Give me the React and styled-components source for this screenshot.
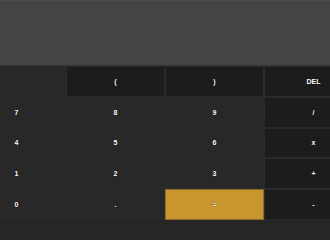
import React from "react";
import styled, { createGlobalStyle } from "styled-components";

const Global = createGlobalStyle`
  html, body { margin: 0; padding: 0; background: #262626; overflow: hidden; }
  #root { width: 330px; height: 220px; overflow: hidden; }
`;

const Frame = styled.div`
  width: 330px;
  height: 220px;
  overflow: hidden;
  display: flex;
  justify-content: center;
`;

const Calculator = styled.div`
  flex: 0 0 396px;
  height: 220px;
  display: flex;
  flex-direction: column;
  font-family: "Liberation Sans", Arial, sans-serif;
`;

const Screen = styled.div`
  flex: 0 0 66px;
  box-sizing: border-box;
  background: #444444;
  border-top: 1px solid #4d4d4d;
  border-bottom: 1px solid #333333;
`;

const Keys = styled.div`
  flex: 1;
  display: grid;
  grid-template-columns: repeat(4, 1fr);
  grid-template-rows: repeat(5, 1fr);
`;

const tones = {
  num: "#282828",
  op: "#1c1c1c",
  eq: "#c8952f",
  blank: "#282828",
};

const Key = styled.button`
  all: unset;
  box-sizing: border-box;
  display: flex;
  align-items: center;
  justify-content: center;
  background: ${(p) => tones[p.$tone]};
  border: 1px solid ${(p) => (p.$tone === "eq" ? "#8a6a28" : "#2a2a2a")};
  color: ${(p) => (p.$tone === "eq" ? "#e6e0d6" : "#ffffff")};
  font-size: 7px;
  font-weight: 900;
  line-height: 1;
  text-shadow: 0 0 1px #000;
`;

const rows = [
  [["", "blank"], ["(", "op"], [")", "op"], ["DEL", "op"]],
  [["7", "num"], ["8", "num"], ["9", "num"], ["/", "op"]],
  [["4", "num"], ["5", "num"], ["6", "num"], ["x", "op"]],
  [["1", "num"], ["2", "num"], ["3", "num"], ["+", "op"]],
  [["0", "num"], [".", "num"], ["=", "eq"], ["-", "op"]],
];

export default function App() {
  return (
    <>
      <Global />
      <Frame>
        <Calculator>
          <Screen />
          <Keys>
            {rows.flat().map(([label, tone], i) => (
              <Key key={i} $tone={tone}>
                {label}
              </Key>
            ))}
          </Keys>
        </Calculator>
      </Frame>
    </>
  );
}
